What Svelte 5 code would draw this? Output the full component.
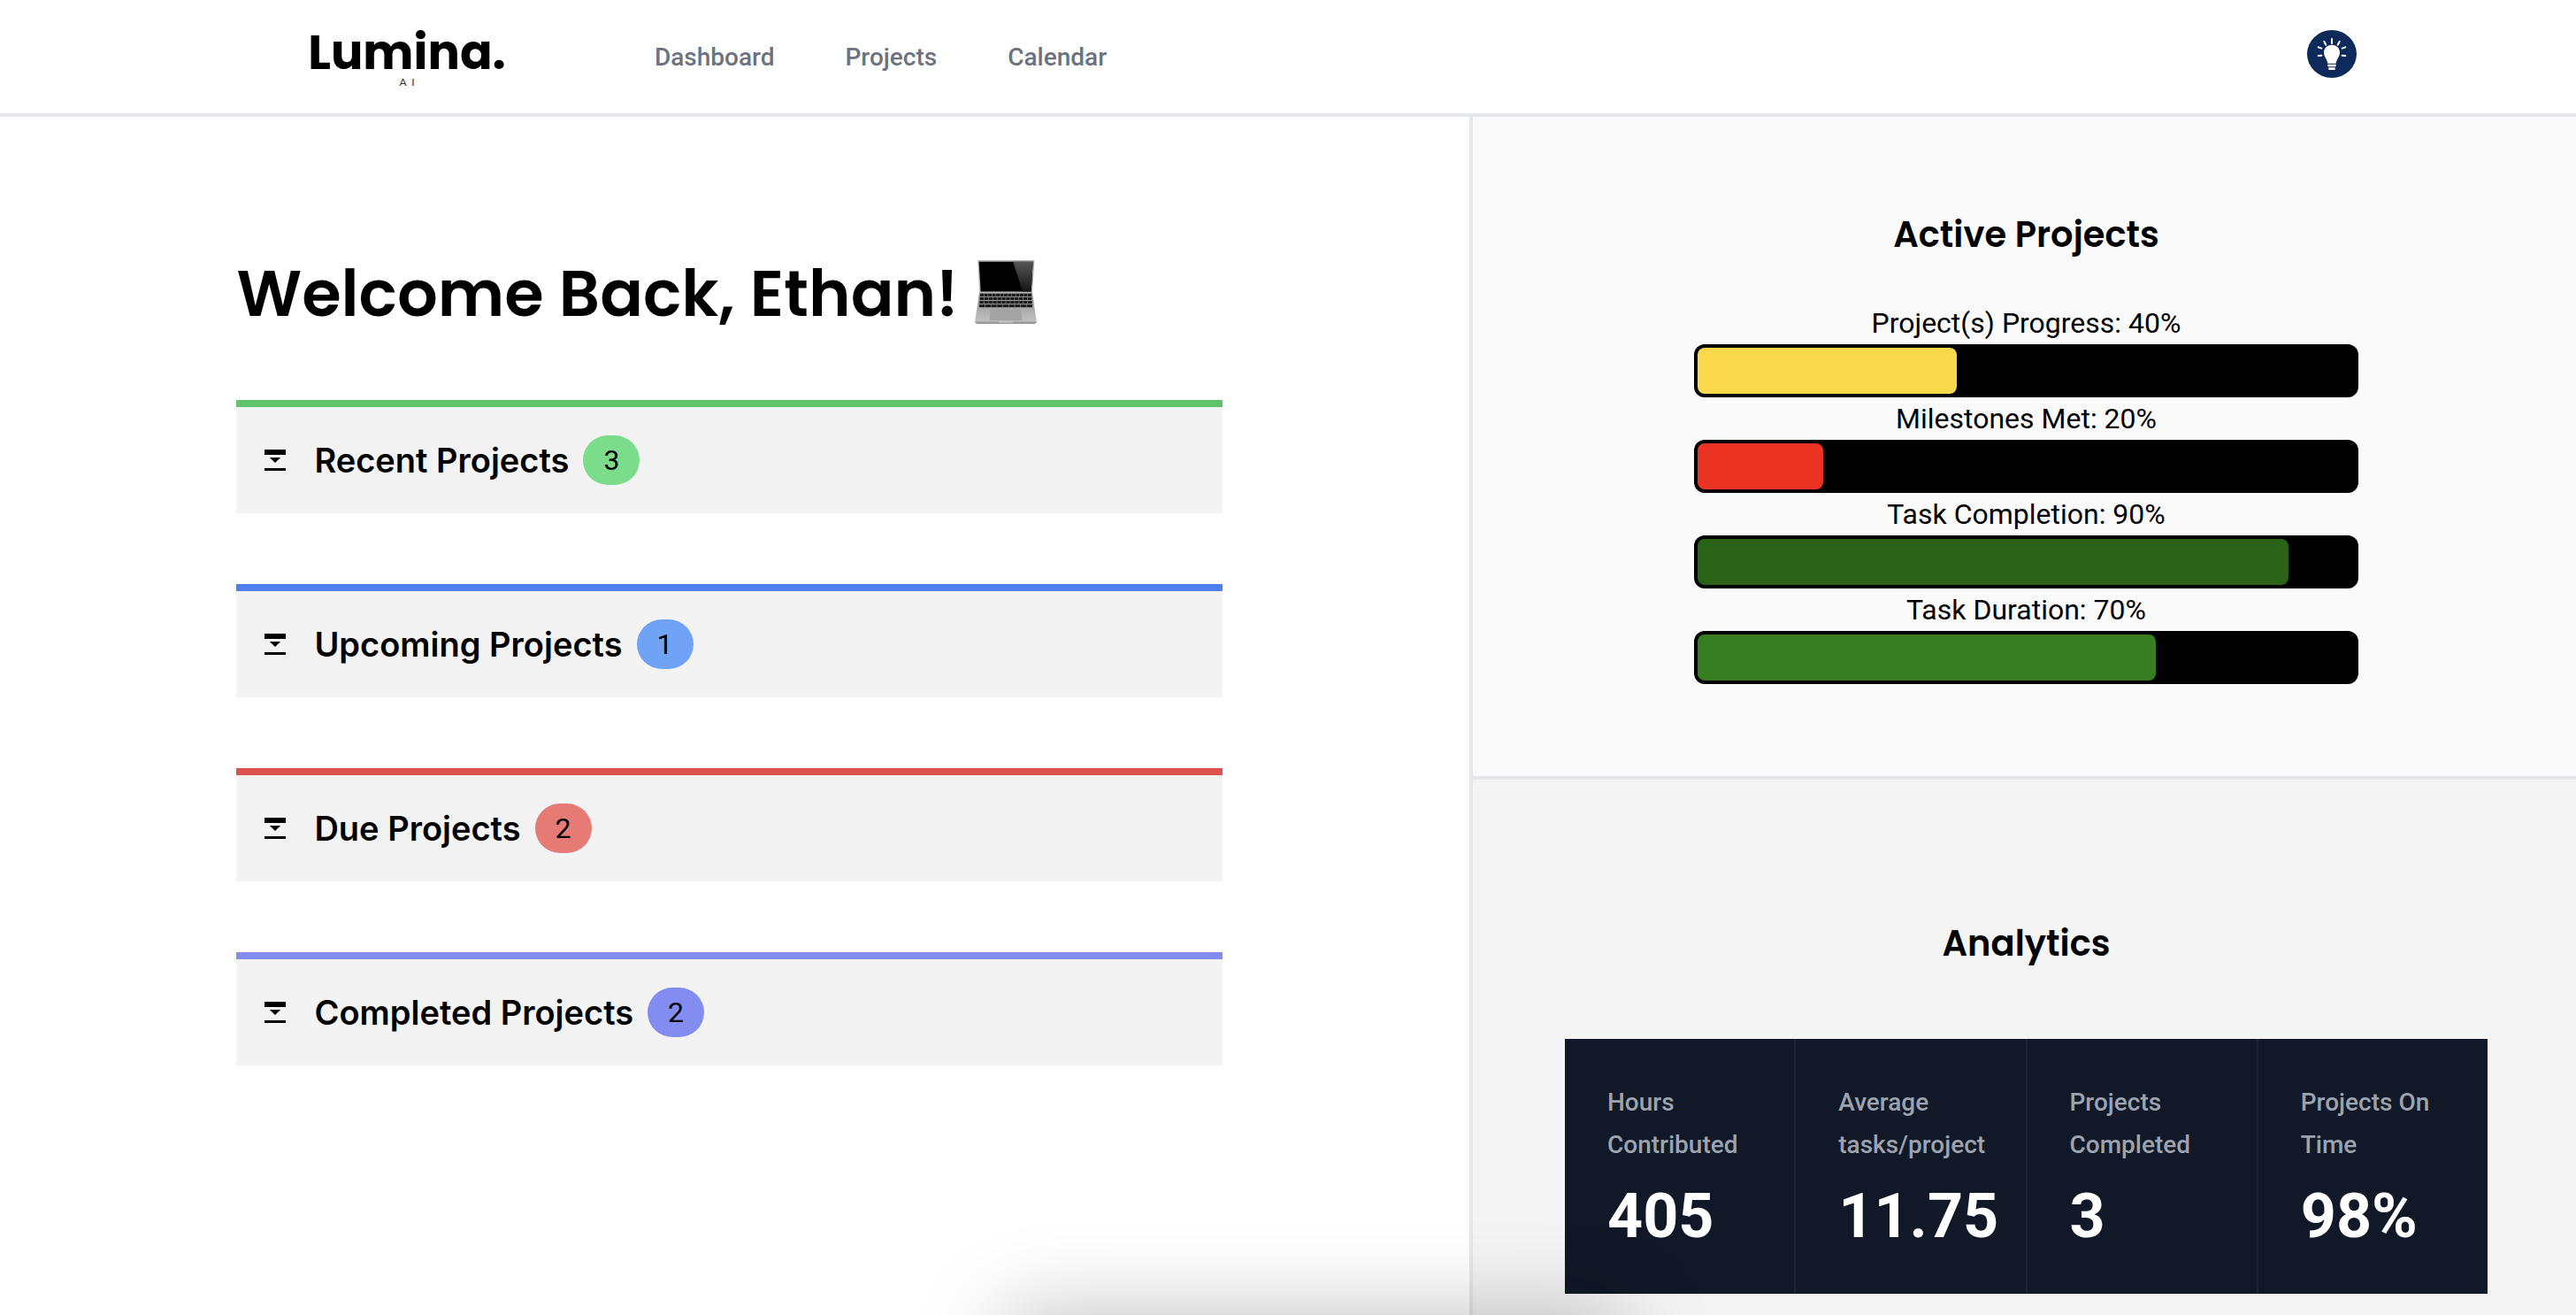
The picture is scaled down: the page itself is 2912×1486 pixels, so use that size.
<script>
  const links = ['Dashboard', 'Projects', 'Calendar'];

  const groups = [
    { title: 'Recent Projects', count: 3, tone: 'green' },
    { title: 'Upcoming Projects', count: 1, tone: 'blue' },
    { title: 'Due Projects', count: 2, tone: 'red' },
    { title: 'Completed Projects', count: 2, tone: 'indigo' },
  ];

  const meters = [
    { label: 'Project(s) Progress: 40%', fill: 39.4, tone: 'yellow' },
    { label: 'Milestones Met: 20%', fill: 19.1, tone: 'scarlet' },
    { label: 'Task Completion: 90%', fill: 89.9, tone: 'forest' },
    { label: 'Task Duration: 70%', fill: 69.7, tone: 'leaf' },
  ];

  const stats = [
    { label: 'Hours Contributed', value: '405' },
    { label: 'Average tasks/project', value: '11.75' },
    { label: 'Projects Completed', value: '3' },
    { label: 'Projects On Time', value: '98%' },
  ];

  const keyRows = [
    { y: 111, x: 17, w: 170, n: 13 },
    { y: 123, x: 16, w: 172, n: 12 },
    { y: 135, x: 15, w: 174, n: 12 },
    { y: 147, x: 14, w: 176, n: 9 },
  ];

  let open = $state('');
</script>

<div class="page">
  <header>
    <a class="logo" href="#home" aria-label="Lumina AI">
      <span class="word">Lumina.</span>
      <span class="sub">A&nbsp; I</span>
    </a>
    <nav>
      {#each links as link}
        <a href={'#' + link.toLowerCase()}>{link}</a>
      {/each}
    </nav>
    <button class="avatar" aria-label="Account">
      <svg viewBox="0 0 168 162" preserveAspectRatio="none" aria-hidden="true">
        <ellipse cx="84" cy="81" rx="84" ry="81" fill="#0d2a5b" />
        <path
          d="M84 50C68 50 57 61 57 76C57 91 67 96 70 113H98C101 96 111 91 111 76C111 61 100 50 84 50Z"
          fill="#fff"
        />
        <path d="M70 116H98V124H70ZM73 127H95V135H73Z" fill="#fff" />
        <path
          d="M84 30V45M58 39L64 50M110 39L104 50M38 58L49 62M130 58L119 62M38 87L49 86M130 87L119 86"
          stroke="#fff"
          stroke-width="6"
          stroke-linecap="round"
        />
      </svg>
    </button>
  </header>

  <div class="columns">
    <main>
      <h1>
        Welcome Back, Ethan!
        <svg class="laptop" viewBox="0 0 204 211" role="img" aria-label="Laptop">
          <defs>
            <linearGradient id="deck" x1="0" y1="0" x2="0" y2="1">
              <stop offset="0" stop-color="#8e8e8e" />
              <stop offset="1" stop-color="#c4c4c4" />
            </linearGradient>
            <linearGradient id="glare" x1="0" y1="0" x2="0" y2="1">
              <stop offset="0" stop-color="#555" />
              <stop offset="1" stop-color="#161616" />
            </linearGradient>
          </defs>
          <path d="M12 0H193Q197 0 197 4L190 108H15L9 4Q9 0 12 0Z" fill="#b5b5b5" />
          <path d="M13 5H192L186 104H19Z" fill="#000" />
          <path d="M126 5H192L186 104H158Z" fill="url(#glare)" />
          <path d="M14 108H190L204 203Q204 208 199 208H5Q0 208 0 203Z" fill="url(#deck)" />
          {#each keyRows as row}
            <rect x={row.x} y={row.y} width={row.w} height="9" fill="#1b1b1b" />
            {#each Array(row.n - 1) as _, i}
              <rect x={row.x + ((i + 1) * row.w) / row.n - 1} y={row.y} width="2" height="9" fill="#8a8a8a" />
            {/each}
          {/each}
          <path d="M51 162H153L156 200H48Z" fill="#a3a3a3" />
          <path d="M0 204H76L80 207H124L128 204H204Q203 211 197 211H7Q1 211 0 204Z" fill="#999" />
        </svg>
      </h1>

      <div class="groups">
        {#each groups as group}
          <button
            class="group {group.tone}"
            aria-expanded={open === group.title}
            onclick={() => (open = open === group.title ? '' : group.title)}
          >
            <svg class="toggle" viewBox="0 0 24 24" aria-hidden="true">
              <path d="M0 0H24V6H0ZM6 9H18L12 15ZM0 21H24V24H0Z" />
            </svg>
            <span class="name">{group.title}</span>
            <span class="count">{group.count}</span>
          </button>
        {/each}
      </div>
    </main>

    <aside>
      <section class="active">
        <h2>Active Projects</h2>
        <div class="meters">
          {#each meters as meter}
            <div class="label">{meter.label}</div>
            <div class="track">
              <div class="fill {meter.tone}" style="width: {meter.fill}%"></div>
            </div>
          {/each}
        </div>
      </section>

      <section class="analytics">
        <h2>Analytics</h2>
        <dl>
          {#each stats as stat}
            <div class="stat">
              <dt>{stat.label}</dt>
              <dd>{stat.value}</dd>
            </div>
          {/each}
        </dl>
      </section>
    </aside>
  </div>

  <div class="shade"></div>
</div>

<style>
  :global(body) {
    margin: 0;
    background: #fff;
  }

  .page {
    display: flex;
    flex-direction: column;
    min-height: 100vh;
    overflow: hidden;
    position: relative;
    box-sizing: border-box;
    font-family: Roboto, 'Liberation Sans', sans-serif;
    color: #000;
  }

  button {
    border: 0;
    padding: 0;
    background: none;
    color: inherit;
    font: inherit;
    cursor: pointer;
  }

  header {
    display: flex;
    align-items: center;
    height: 126px;
    padding: 2px 248px 0 348px;
    border-bottom: 4px solid #e5e7eb;
  }

  .logo {
    display: flex;
    flex-direction: column;
    align-items: center;
    width: 224px;
    color: #000;
    text-decoration: none;
  }

  .word {
    font: 700 54px/56px Poppins, Inter, sans-serif;
  }

  .sub {
    font: 400 12px/12px Lato, sans-serif;
    color: #333;
  }

  nav {
    display: flex;
    gap: 80px;
    margin-left: 168px;
  }

  nav a {
    font-size: 28px;
    line-height: 40px;
    font-weight: 500;
    color: #6b7280;
    text-decoration: none;
  }

  .avatar {
    width: 56px;
    height: 54px;
    margin: 0 0 8px auto;
  }

  .avatar svg {
    display: block;
    width: 100%;
    height: 100%;
  }

  .columns {
    flex: 1;
    display: grid;
    grid-template-columns: minmax(0, 1fr) calc(300% / 7 + 3px);
  }

  main {
    padding: 160px 16.8% 0 16.1%;
  }

  h1 {
    display: flex;
    align-items: center;
    gap: 18px;
    margin: 0 0 80px;
    font: 600 72px/80px Poppins, Inter, sans-serif;
    white-space: nowrap;
  }

  .laptop {
    width: 70px;
    height: 72px;
    margin-bottom: 4px;
  }

  .groups {
    display: grid;
    gap: 80px;
  }

  .group {
    display: flex;
    align-items: center;
    height: 128px;
    padding: 0 32px;
    border-top: 8px solid var(--line);
    background: #f3f3f3;
  }

  .toggle {
    width: 24px;
    height: 24px;
    margin-right: 32px;
  }

  .name {
    font: 600 38px/56px Inter, sans-serif;
  }

  .count {
    min-width: 64px;
    margin-left: 16px;
    border-radius: 28px;
    background: var(--pill);
    font-size: 32px;
    line-height: 56px;
  }

  .green {
    --line: #5fc36b;
    --pill: #7bdc8c;
  }

  .blue {
    --line: #4d80ee;
    --pill: #70a3f5;
  }

  .red {
    --line: #dd524c;
    --pill: #e67a75;
  }

  .indigo {
    --line: #838df1;
    --pill: #838df1;
  }

  aside {
    display: flex;
    flex-direction: column;
    border-left: 4px solid #e5e7eb;
  }

  h2 {
    margin: 0;
    font: 600 40px/56px Poppins, Inter, sans-serif;
    text-align: center;
  }

  .active {
    padding: 105px 0 104px 4px;
    border-bottom: 4px solid #e5e7eb;
    background: #fafafa;
  }

  .meters {
    width: 60.4%;
    margin: 48px auto 0;
  }

  .label {
    font-size: 32px;
    line-height: 48px;
    text-align: center;
  }

  .track {
    height: 52px;
    padding: 4px;
    border-radius: 12px;
    background: #000;
  }

  .fill {
    height: 100%;
    border-radius: 8px;
  }

  .yellow {
    background: #f9d84a;
  }

  .scarlet {
    background: #eb3323;
  }

  .forest {
    background: #2a6318;
  }

  .leaf {
    background: #377e22;
  }

  .analytics {
    flex: 1;
    padding: 157px 100px 24px 104px;
    background: #f4f4f4;
  }

  dl {
    display: grid;
    grid-template-columns: repeat(4, minmax(0, 1fr));
    gap: 2px;
    margin: 80px 0 0;
    background: #1d2431;
  }

  .stat {
    padding: 48px 24px 48px 48px;
    background: #111827;
  }

  dt {
    font-size: 28px;
    line-height: 48px;
    font-weight: 500;
    color: #9ca3af;
  }

  dd {
    margin: 16px 0 0;
    font-size: 70px;
    line-height: 80px;
    font-weight: 700;
    color: #fff;
  }

  .shade {
    position: absolute;
    top: 100%;
    left: 39%;
    width: 24%;
    height: 200px;
    box-shadow: 0 0 100px rgba(0, 0, 0, 0.26);
    pointer-events: none;
  }
</style>
